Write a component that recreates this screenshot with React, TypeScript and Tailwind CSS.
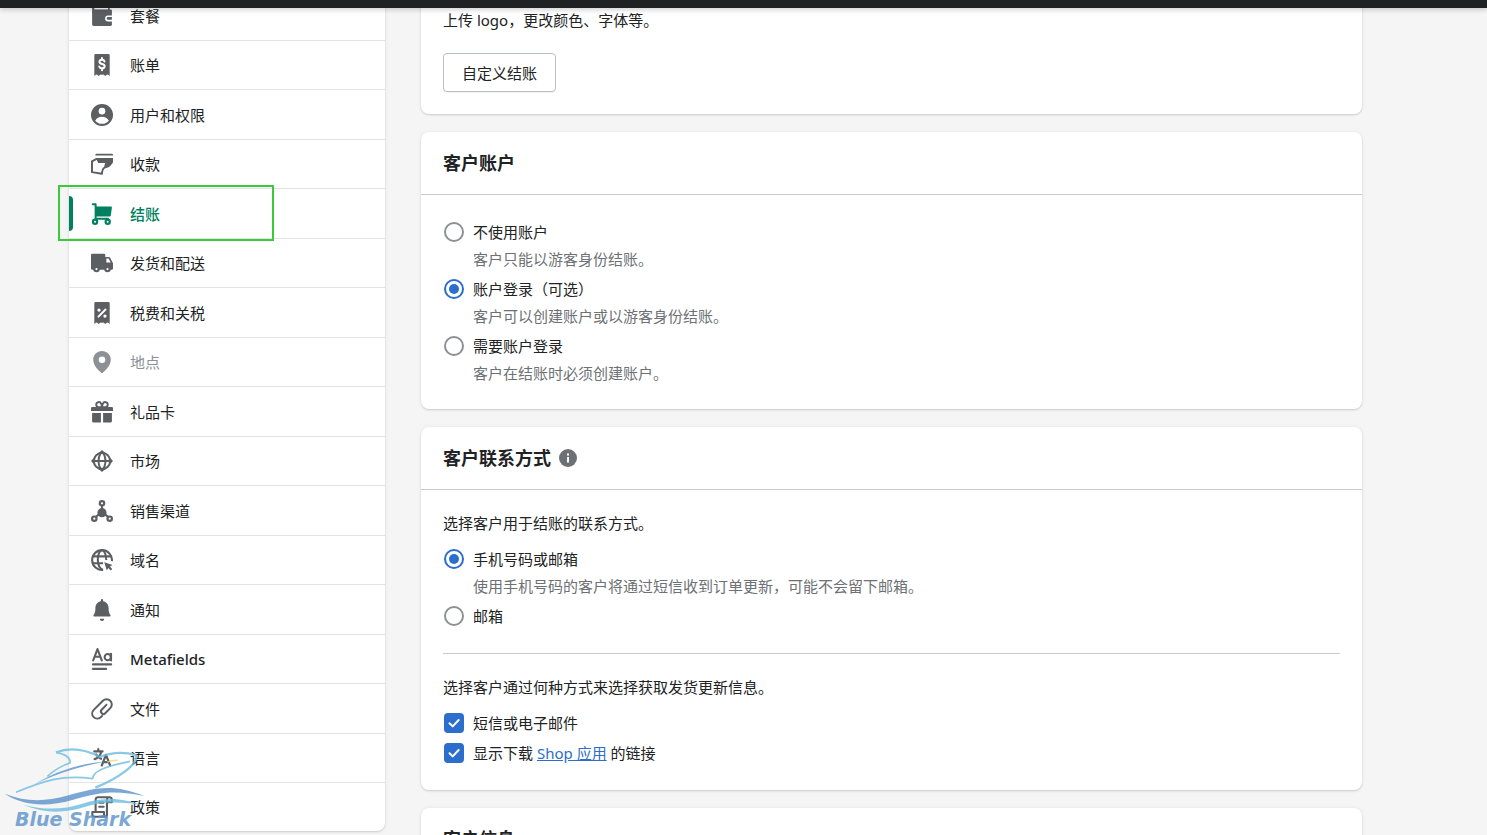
import { useState } from "react";
import type { ReactNode } from "react";
import clsx from "clsx";

type NavItem = {
  label: string;
  icon: ReactNode;
  disabled?: boolean;
};

/* Sidebar icons, all on a 20x20 grid */
const RECEIPT =
  "M4.2 0h11.6A1.2 1.2 0 0 1 17 1.2V20l-1.4-1.2a.9.9 0 0 0-1.2 0L13 20l-1.4-1.2a.9.9 0 0 0-1.2 0h-.8a.9.9 0 0 0-1.2 0L7 20l-1.4-1.2a.9.9 0 0 0-1.2 0L3 20V1.2A1.2 1.2 0 0 1 4.2 0z";

const NAV: NavItem[] = [
  {
    label: "套餐",
    icon: (
      <>
        <path d="M1 3a2 2 0 0 1 2-2h13a1 1 0 0 1 1 1v2h1a1 1 0 0 1 1 1v4.5h-3.5a2.7 2.7 0 0 0 0 5.4H19V18a1 1 0 0 1-1 1H2.5A1.5 1.5 0 0 1 1 17.5z" />
        <path d="M3 2.6h12.5V4H3z" fill="#fff" />
        <path d="M15.5 11H19v2.4h-3.5a1.2 1.2 0 0 1 0-2.4z" />
      </>
    ),
  },
  {
    label: "账单",
    icon: (
      <>
        <path d={RECEIPT} />
        <path
          d="M12.3 6.8C12 5.7 11.1 5.2 10 5.2c-1.3 0-2.3.7-2.3 1.9 0 2.8 4.7 1.3 4.7 4 0 1.2-1 1.9-2.4 1.9-1.2 0-2.2-.6-2.5-1.7M10 3.6v1.6M10 13v1.7"
          fill="none"
          stroke="#fff"
          strokeWidth="1.8"
          strokeLinecap="round"
        />
      </>
    ),
  },
  {
    label: "用户和权限",
    icon: (
      <>
        <circle cx="10" cy="10" r="10" />
        <circle cx="10" cy="6.5" r="3" fill="#fff" />
        <path d="M3.8 15.2C5 12.9 7.3 11.5 10 11.5s5 1.4 6.2 3.7A8 8 0 0 1 10 18a8 8 0 0 1-6.2-2.8z" fill="#fff" />
      </>
    ),
  },
  {
    label: "收款",
    icon: (
      <>
        <path d="M5 .7h14a1 1 0 0 1 1 1v.5H4v-.5a1 1 0 0 1 1-1z" />
        <path d="M4.5 4.5H20v3.8c-.8 2.2-3.2 3.6-5.5 4-.9.2-1.900.2-2.700.2l1.200-3.500H6.500z" />
        <path
          d="M5.500 5.200.9 7.600v9.800l9 1.500c.2-2.200.4-4.400 2.200-5.500 1.500-.9 3.700-.2 5.200-2.700"
          fill="none"
          stroke="currentColor"
          strokeWidth="1.8"
          strokeLinejoin="round"
        />
      </>
    ),
  },
  {
    label: "结账",
    icon: (
      <>
        <path d="M4 3.200h14.200a.8.8 0 0 1 .8.9l-1 7.300a1 1 0 0 1-1 .8H4z" />
        <path
          d="M1.600 1.200h2.600v13.100h11.300"
          fill="none"
          stroke="currentColor"
          strokeWidth="1.8"
          strokeLinecap="round"
          strokeLinejoin="round"
        />
        <circle cx="3.700" cy="17" r="1.900" fill="#fff" stroke="currentColor" strokeWidth="2" />
        <circle cx="15.200" cy="17" r="1.900" fill="#fff" stroke="currentColor" strokeWidth="2" />
      </>
    ),
  },
  {
    label: "发货和配送",
    icon: (
      <>
        <path d="M1.200 1.500h10.600A1.200 1.200 0 0 1 13 2.700v1.800h3.300c.5 0 .9.3 1.100.7L20 10.200V15a1.200 1.200 0 0 1-1.200 1.200H1.200A1.200 1.200 0 0 1 0 15V2.700a1.200 1.200 0 0 1 1.200-1.200z" />
        <path d="M14 6h2l1.900 3.600H14z" fill="#fff" />
        <circle cx="5" cy="15.500" r="2" fill="#fff" stroke="currentColor" strokeWidth="2" />
        <circle cx="15" cy="15.500" r="2" fill="#fff" stroke="currentColor" strokeWidth="2" />
      </>
    ),
  },
  {
    label: "税费和关税",
    icon: (
      <>
        <path d={RECEIPT} />
        <path d="m6.800 13.300 6.400-6.500" stroke="#fff" strokeWidth="1.8" strokeLinecap="round" />
        <circle cx="7.300" cy="7.300" r="1.500" fill="#fff" />
        <circle cx="12.700" cy="12.800" r="1.500" fill="#fff" />
      </>
    ),
  },
  {
    label: "地点",
    disabled: true,
    icon: (
      <path
        fillRule="evenodd"
        d="M10 0C5.600 0 2 3.500 2 7.800 2 13.500 7.200 18 9.300 19.800c.4.3 1 .3 1.400 0C12.800 18 18 13.500 18 7.800 18 3.500 14.400 0 10 0zm0 11a3 3 0 1 1 0-6 3 3 0 0 1 0 6z"
      />
    ),
  },
  {
    label: "礼品卡",
    icon: (
      <>
        <path d="M1 5.500h18a1 1 0 0 1 1 1v2.700H0V6.500a1 1 0 0 1 1-1zM1 11h8v8.500H2a1 1 0 0 1-1-1zM11 11h8v7.500a1 1 0 0 1-1 1h-7z" />
        <path
          d="M9.800 5.600H7A2.300 2.300 0 1 1 9.200 2.500c.5.7.7 1.800.6 3.100zM10.200 5.600H13a2.300 2.300 0 1 0-2.200-3.100c-.5.7-.7 1.800-.6 3.100z"
          fill="none"
          stroke="currentColor"
          strokeWidth="1.8"
        />
      </>
    ),
  },
  {
    label: "市场",
    icon: (
      <>
        <path d="M10 0l3.600 3.300H6.400zM10 20l3.600-3.300H6.400zM0 10l3.300-3.600v7.200zM20 10l-3.300-3.600v7.200z" />
        <g fill="none" stroke="currentColor" strokeWidth="1.8">
          <circle cx="10" cy="10" r="7.400" />
          <ellipse cx="10" cy="10" rx="3.100" ry="7.400" />
          <path d="M2 10h16" />
        </g>
      </>
    ),
  },
  {
    label: "销售渠道",
    icon: (
      <>
        <circle cx="10" cy="11.500" r="4.200" />
        <path d="M10 5v6L3.500 16M10 11l6.500 5" fill="none" stroke="currentColor" strokeWidth="1.800" />
        <g fill="#fff" stroke="currentColor" strokeWidth="2">
          <circle cx="10" cy="3" r="2" />
          <circle cx="3" cy="17" r="2" />
          <circle cx="17" cy="17" r="2" />
        </g>
      </>
    ),
  },
  {
    label: "域名",
    icon: (
      <>
        <g fill="none" stroke="currentColor" strokeWidth="1.900">
          <path d="M19 11A9 9 0 1 0 11 19" />
          <path d="M10.800 19C7.500 17.500 6.200 14 6.200 10S7.500 2 10 1c2.500 1 3.800 4.500 3.800 9M1.500 6.700h17M1.500 13H11" />
        </g>
        <path d="m12 12 7.600 2.500-2.400 1.400 2.100 2.200-1.400 1.400-2.200-2.200-1.300 2.300z" />
      </>
    ),
  },
  {
    label: "通知",
    icon: (
      <path d="M10 0a1 1 0 0 1 1 1v1.100c2.900.5 5 2.900 5 5.900 0 3.400.4 5 1.600 6.500.5.6.1 1.500-.7 1.500H3.100c-.8 0-1.200-.9-.7-1.500C3.600 13 4 11.400 4 8c0-3 2.100-5.400 5-5.900V1a1 1 0 0 1 1-1zM8 18h4a2 2 0 0 1-4 0z" />
    ),
  },
  {
    label: "Metafields",
    icon: (
      <g fill="none" stroke="currentColor" strokeWidth="1.900" strokeLinecap="round" strokeLinejoin="round">
        <path d="M2 11.300 5.900 1l3.900 10.300M3.300 8h5.200M18.200 5.300v6" />
        <circle cx="15.200" cy="8.300" r="2.800" />
        <path d="M1.800 14.900h16.500M1.800 19h12" />
      </g>
    ),
  },
  {
    label: "文件",
    icon: (
      <path
        d="m10 16.300-1.200 1.200a4.600 4.600 0 0 1-6.500-6.500l8.500-8.500a4.700 4.700 0 0 1 6.700 6.700l-4.600 4.600a2.200 2.200 0 0 1-3.200-3.100l4.300-4.500"
        fill="none"
        stroke="currentColor"
        strokeWidth="1.800"
        strokeLinecap="round"
      />
    ),
  },
  {
    label: "语言",
    icon: (
      <g fill="none" stroke="currentColor" strokeWidth="2" strokeLinecap="round" strokeLinejoin="round">
        <path d="M3 4h7.500M6.600 2v2M9.300 4.500c-.8 3-3 5.500-6 6.500M4.700 6.800c1 1.900 2.600 3.200 4.400 3.900" />
        <path d="m9.800 16.800 3.800-9.600 3.800 9.600M11 13.800h5.200" />
      </g>
    ),
  },
  {
    label: "政策",
    icon: (
      <g fill="none" stroke="currentColor" strokeWidth="1.900" strokeLinejoin="round">
        <path d="M4.200 14V3.500a2.300 2.300 0 0 1 2.300-2.300h10.200M14.500 14.500V3.400a2.200 2.200 0 1 1 4.400 0v2.200h-4.400" />
        <path d="M1.200 14.600h10.600v2a2.100 2.100 0 0 0 2.200 2.300H3.300a2.200 2.200 0 0 1-2.100-2.200zM14.500 13v4c0 1.200-.6 1.900-1.500 1.900" />
        <path d="M7.500 6h4M7.500 9.800h4" strokeLinecap="round" />
      </g>
    ),
  },
];

const ACCOUNT_OPTIONS = [
  { id: "none", label: "不使用账户", help: "客户只能以游客身份结账。" },
  { id: "optional", label: "账户登录（可选）", help: "客户可以创建账户或以游客身份结账。" },
  { id: "required", label: "需要账户登录", help: "客户在结账时必须创建账户。" },
];

const CONTACT_OPTIONS = [
  { id: "phone", label: "手机号码或邮箱", help: "使用手机号码的客户将通过短信收到订单更新，可能不会留下邮箱。" },
  { id: "email", label: "邮箱" },
];

function Sidebar() {
  return (
    <nav className="w-[316px] shrink-0 self-start rounded-lg bg-white shadow-[0_0_5px_rgba(23,24,24,0.05),0_1px_2px_rgba(0,0,0,0.15)]">
      <ul>
        {NAV.map((item) => {
          const active = item.label === "结账";
          return (
            <li
              key={item.label}
              className="relative h-[50px] border-b border-[#e1e3e5] last:h-12 last:border-b-0 even:h-[49px]"
            >
              <a
                href="#"
                aria-disabled={item.disabled}
                aria-current={active ? "page" : undefined}
                className={clsx(
                  "flex h-full items-center gap-[17px] pl-[22px]",
                  active && "font-medium text-[#008060]",
                  item.disabled && "text-[#8c9196]",
                  item.label === "Metafields" && "font-medium"
                )}
              >
                <svg
                  viewBox="0 0 20 20"
                  fill="currentColor"
                  className={clsx("size-[22px] shrink-0", !active && !item.disabled && "text-[#5c5f62]")}
                >
                  {item.icon}
                </svg>
                {item.label}
              </a>
              {active && (
                <>
                  <span className="absolute top-[7px] left-0 h-[35px] w-1 rounded-r bg-[#008060]" />
                  <span className="pointer-events-none absolute -top-1 -left-[11px] h-14 w-[216px] border-2 border-[#3cc93c]" />
                </>
              )}
            </li>
          );
        })}
      </ul>
    </nav>
  );
}

function Card({ title, info, children }: { title?: string; info?: boolean; children: ReactNode }) {
  return (
    <section className="rounded-lg bg-white shadow-[0_0_5px_rgba(23,24,24,0.05),0_1px_2px_rgba(0,0,0,0.15)]">
      {title && (
        <header className="flex h-[63px] items-center gap-2 border-b border-[#c9cccf] px-[22px]">
          <h2 className="text-[18px] leading-6 font-bold">{title}</h2>
          {info && (
            <button type="button" aria-label="更多信息">
              <svg viewBox="0 0 18 18" className="size-[18px]">
                <circle cx="9" cy="9" r="9" fill="#6d7175" />
                <path d="M8 4.500h2v2H8zM8 8h2v5.500H8z" fill="#fff" />
              </svg>
            </button>
          )}
        </header>
      )}
      {children}
    </section>
  );
}

type Option = { id: string; label: string; help?: string };

function RadioGroup({ name, options, initial }: { name: string; options: Option[]; initial: string }) {
  const [value, setValue] = useState(initial);

  return (
    <div className="flex flex-col gap-[3px]">
      {options.map((o) => (
        <div key={o.id}>
          <label className="flex h-[30px] items-center gap-[9px] pl-px">
            <input
              type="radio"
              name={name}
              checked={value === o.id}
              onChange={() => setValue(o.id)}
              aria-describedby={o.help ? `${name}-${o.id}-help` : undefined}
              className="size-5 appearance-none rounded-full border-2 border-[#8c9196] bg-white p-[3px] checked:border-[#2c6ecb] checked:bg-[#2c6ecb] checked:bg-clip-content"
            />
            {o.label}
          </label>
          {o.help && (
            <p id={`${name}-${o.id}-help`} className="pl-[30px] leading-6 text-[#6d7175]">
              {o.help}
            </p>
          )}
        </div>
      ))}
    </div>
  );
}

function Checkbox({ id, children }: { id: string; children: ReactNode }) {
  return (
    <div className="flex h-[30px] items-center gap-[9px] pl-px">
      <span className="grid size-5">
        <input
          id={id}
          type="checkbox"
          defaultChecked
          className="peer col-start-1 row-start-1 size-5 appearance-none rounded border-2 border-[#8c9196] bg-white checked:border-[#2c6ecb] checked:bg-[#2c6ecb]"
        />
        <svg
          viewBox="0 0 20 20"
          className="pointer-events-none invisible col-start-1 row-start-1 size-5 peer-checked:visible"
          fill="none"
          stroke="#fff"
          strokeWidth="2"
          strokeLinecap="round"
          strokeLinejoin="round"
        >
          <path d="m5.500 10.200 3.200 3.200 6-6.400" />
        </svg>
      </span>
      <label htmlFor={id}>{children}</label>
    </div>
  );
}

function Watermark() {
  return (
    <div className="pointer-events-none absolute bottom-0 left-0 h-[95px] w-[150px] opacity-80">
      <svg viewBox="0 180 450 285" className="h-full w-full" fill="none">
        <g fill="none" stroke="#6bbce0" strokeWidth="7" strokeLinejoin="round">
          <path d="M168 217c48-18 90-8 132 14 38-15 76-15 108-5 8 28-60 72-122 97" />
          <path d="M168 217c32 6 44 18 42 32-26 8-48 22-68 40" strokeWidth="5" />
          <path d="M48 337c80-34 140-54 230-41 0-24 44-38 112-52" strokeWidth="5" />
        </g>
        <path d="M70 374c65 17 120 15 177-3 72-22 119-16 184 5-70-11-120-13-180 6-62 19-121 18-181-8z" fill="#6bbce0" />
        <g fill="#5b92cb">
          <path d="M103 313c66-40 134-62 228-71-84 15-150 34-228 71z" />
          <path d="M14 341c60 24 118 25 184 7 91-26 139-38 236 0-88-18-133-13-217 12-79 23-150 16-203-19z" />
        </g>
        <path d="M322 246q17-6 31-5" stroke="#f5d778" strokeWidth="5" />
      </svg>
      <span className="absolute bottom-1 left-[15px] font-['DejaVu_Sans'] text-[19px] leading-6 font-bold whitespace-nowrap text-[#5b92cb] italic">
        Blue Shark
      </span>
    </div>
  );
}

export default function App() {
  return (
    <div
      lang="zh-CN"
      className="relative flex h-screen flex-col overflow-hidden bg-[#f5f5f5] font-['Noto_Sans','Noto_Sans_CJK_SC',sans-serif] text-[15px] leading-[22px] text-[#202223]"
    >
      <header className="relative z-10 h-2 shrink-0 bg-[#202123] shadow-[0_2px_5px_rgba(0,0,0,0.18)]" />

      {/* Page is scrolled, so the first rows run under the top bar */}
      <div className="-mt-[17px] flex gap-9 pr-[125px] pl-[69px]">
        <Sidebar />

        <main className="flex min-w-0 flex-1 flex-col gap-[18px]">
          <Card>
            <div className="flex flex-col items-start gap-[22px] px-[22px] pt-[18px] pb-[22px]">
              <p>上传 logo，更改颜色、字体等。</p>
              <button
                type="button"
                className="h-[39px] rounded border border-[#babfc3] px-[18px] shadow-[0_1px_0_rgba(0,0,0,0.05)]"
              >
                自定义结账
              </button>
            </div>
          </Card>

          <Card title="客户账户">
            <div className="px-[22px] pt-[22px] pb-6">
              <RadioGroup name="accounts" options={ACCOUNT_OPTIONS} initial="optional" />
            </div>
          </Card>

          <Card title="客户联系方式" info>
            <div className="px-[22px] pt-[22px] pb-[22px]">
              <p className="pb-[10px]">选择客户用于结账的联系方式。</p>
              <RadioGroup name="contact" options={CONTACT_OPTIONS} initial="phone" />
              <hr className="my-[22px] border-[#c9cccf]" />
              <p className="pb-[10px]">选择客户通过何种方式来选择获取发货更新信息。</p>
              <Checkbox id="sms">短信或电子邮件</Checkbox>
              <Checkbox id="shop">
                显示下载{" "}
                <a href="#" className="text-[#2c6ecb] underline">
                  Shop 应用
                </a>{" "}
                的链接
              </Checkbox>
            </div>
          </Card>

          <Card title="客户信息">
            <div className="h-24" />
          </Card>
        </main>
      </div>

      <Watermark />
    </div>
  );
}
